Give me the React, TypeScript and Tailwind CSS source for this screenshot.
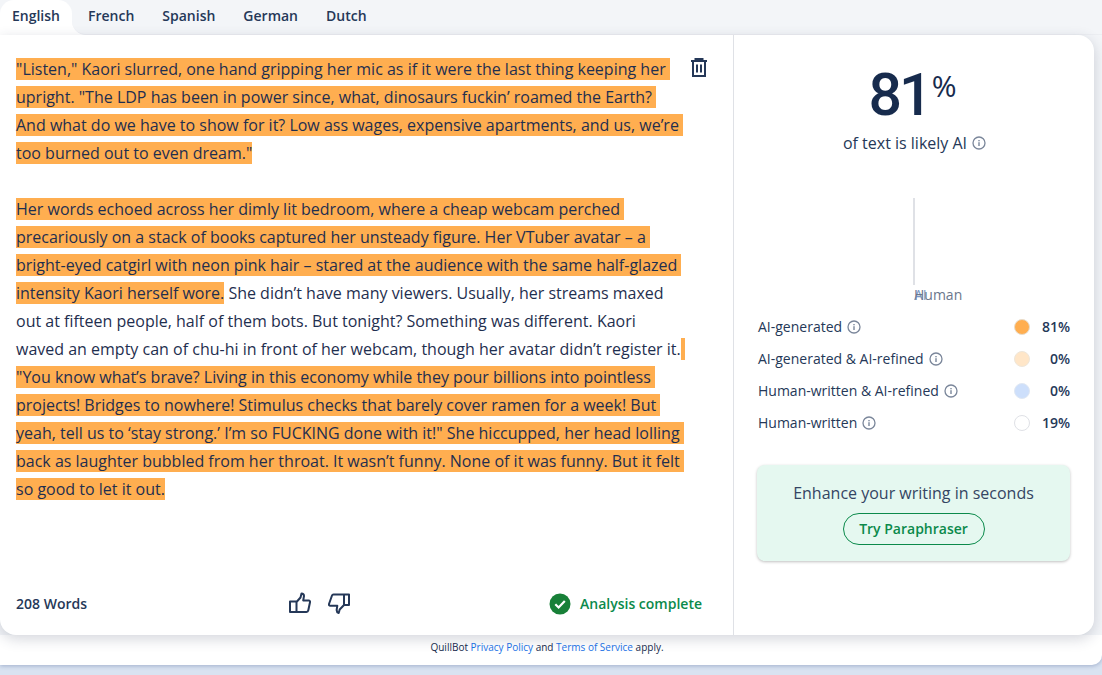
import React from "react";

const Info = ({ className = "" }: { className?: string }) => (
  <svg viewBox="0 0 14 14" className={"w-[14px] h-[14px] shrink-0 " + className} fill="none">
    <circle cx="7" cy="7" r="6" stroke="#7a869a" strokeWidth="1.3" />
    <rect x="6.3" y="6.2" width="1.4" height="3.8" fill="#7a869a" />
    <rect x="6.3" y="4" width="1.4" height="1.3" fill="#7a869a" />
  </svg>
);

const H = ({ children }: { children: React.ReactNode }) => <span className="bg-[#ffae50]">{children}</span>;

const rows = [
  { label: "AI-generated", dot: "bg-[#ffae50] border-[#e8dccb]", pct: "81%" },
  { label: "AI-generated & AI-refined", dot: "bg-[#ffe6c8] border-[#eee6da]", pct: "0%" },
  { label: "Human-written & AI-refined", dot: "bg-[#cddffb] border-[#dfe7f3]", pct: "0%" },
  { label: "Human-written", dot: "bg-white border-[#dfe1e6]", pct: "19%" },
];

export default function App() {
  return (
    <div className="h-[675px] w-[1102px] overflow-hidden bg-[#d9e3f1] font-['Open_Sans','Noto_Sans',sans-serif] text-[#172b4d]">
      <div className="h-[665px] bg-white rounded-br-[10px] shadow-[0_1px_4px_rgba(90,110,160,0.45)] flex flex-col">
        <div className="h-[635px] bg-[#f3f5f8] flex flex-col shrink-0">
          <div className="h-[35px] flex bg-[linear-gradient(#f3f5f8_50%,#ffffff_50%)] shrink-0">
            <div className="w-[72px] bg-white rounded-t-[14px] pl-3 pt-[6px] text-sm font-semibold text-[#253858] leading-[20px]">English</div>
            <div className="flex-1 bg-[#f3f5f8] rounded-bl-[14px] pl-4 pt-[6px] flex gap-7 text-sm font-semibold text-[#253858] leading-[20px] border-b border-[#eceef2]">
              <span>French</span>
              <span>Spanish</span>
              <span>German</span>
              <span>Dutch</span>
            </div>
          </div>
          <div className="relative w-[1094px] h-[600px] bg-white rounded-tr-[16px] rounded-b-[16px] shadow-[0_4px_14px_rgba(40,50,80,0.2)] flex">
            <div className="w-[734px] border-r border-[#dfe1e6] pl-4 pr-[17px] flex flex-col shrink-0">
              <div className="flex-1 flex pt-5">
                <div className="w-[675px] shrink-0 text-base leading-[28px] whitespace-pre text-[#1f2f4f]">
                  <H>{`"Listen," Kaori slurred, one hand gripping her mic as if it were the last thing keeping her \n`}</H>
                  <H>{`upright. "The LDP has been in power since, what, dinosaurs fuckin’ roamed the Earth? \n`}</H>
                  <H>{`And what do we have to show for it? Low ass wages, expensive apartments, and us, we’re \n`}</H>
                  <H>{`too burned out to even dream."`}</H>
                  {"\n\n"}
                  <H>{`Her words echoed across her dimly lit bedroom, where a cheap webcam perched \n`}</H>
                  <H>{`precariously on a stack of books captured her unsteady figure. Her VTuber avatar – a \n`}</H>
                  <H>{`bright-eyed catgirl with neon pink hair – stared at the audience with the same half-glazed \n`}</H>
                  <H>{`intensity Kaori herself wore.`}</H>
                  {` She didn’t have many viewers. Usually, her streams maxed\nout at fifteen people, half of them bots. But tonight? Something was different. Kaori\nwaved an empty can of chu-hi in front of her webcam, though her avatar didn’t register it.`}
                  <H>{` \n`}</H>
                  <H>{`"You know what’s brave? Living in this economy while they pour billions into pointless \n`}</H>
                  <H>{`projects! Bridges to nowhere! Stimulus checks that barely cover ramen for a week! But \n`}</H>
                  <H>{`yeah, tell us to ‘stay strong.’ I’m so FUCKING done with it!" She hiccupped, her head lolling \n`}</H>
                  <H>{`back as laughter bubbled from her throat. It wasn’t funny. None of it was funny. But it felt \n`}</H>
                  <H>{`so good to let it out.`}</H>
                </div>
                <svg viewBox="0 0 16 19" className="w-4 h-[19px] mt-[3px] shrink-0" fill="none" stroke="#253858" strokeWidth="2">
                  <path d="M0 3h16M4.500 3V1h7v2M2 3v15h12V3M6 6.500v8M10 6.500v8" />
                </svg>
              </div>
              <div className="h-[62px] flex items-center justify-between shrink-0 pb-[1px]">
                <span className="text-sm font-semibold text-[#253858] w-[140px]">208 Words</span>
                <div className="flex gap-[17px] items-center ml-[133px]">
                  <svg viewBox="0 0 22 22" className="w-[22px] h-[22px] -mt-[1px]" fill="none" stroke="#253858" strokeWidth="2" strokeLinejoin="round">
                    <path d="M1 9.500h6.500V20H1zM7.500 10l4-4.500L12.500 1.500c1.500 0 2.500 1 2.500 2.500l-.8 4.500h5.500c1 0 1.500.8 1.300 1.800l-1.700 8c-.2 1-.8 1.700-1.800 1.700H7.500" />
                  </svg>
                  <svg viewBox="0 0 22 22" className="w-[22px] h-[22px]" fill="none" stroke="#253858" strokeWidth="2" strokeLinejoin="round">
                    <path d="M16 1.500h5V12h-5M16 1.500H5.500c-.8 0-1.300.4-1.500 1L1 11c-.3 1 .2 1.800 1.300 1.800h7l-.6 3.700c-.2 1.800.5 3 2 3.500l1-3.500L16 12V1.500z" />
                  </svg>
                </div>
                <div className="flex items-center gap-[9px] ml-auto mr-[14px]">
                  <svg viewBox="0 0 22 22" className="w-[22px] h-[22px]">
                    <circle cx="11" cy="11" r="10.500" fill="#188038" />
                    <path d="M6.300 11.300l3.300 3.200 6.200-6.500" fill="none" stroke="#fff" strokeWidth="2.200" />
                  </svg>
                  <span className="text-sm font-semibold text-[#0b8a4b]">Analysis complete</span>
                </div>
              </div>
            </div>
            <div className="flex-1 flex flex-col items-center pt-[21px]">
              <div className="flex items-start h-[75px] mr-[3px]">
                <span className="font-['Roboto',sans-serif] text-[59px] leading-[78px] font-medium text-[#172b4d] tracking-[-3px]">81</span>
                <span className="text-[30px] leading-[44px] font-normal text-[#172b4d] ml-[2px] mt-[8px]">%</span>
              </div>
              <div className="flex items-center gap-[5px] text-base leading-6 text-[#253858] ml-[1px]">
                of text is likely AI <Info />
              </div>
              <div className="flex flex-col items-center mt-[43px] h-[102px] w-full">
                <div className="w-[2px] h-[87px] shrink-0 bg-[#dfe1e6] -ml-[1px]"></div>
                <div className="relative h-5 w-full shrink-0 text-sm leading-5 text-[#6b778c]">
                  <span className="absolute left-[180px] top-0 text-[#5a7fb8] opacity-80">AI</span>
                  <span className="absolute left-[180px] top-0">Human</span>
                </div>
              </div>
              <div className="w-full flex flex-col pl-6 pr-[24px] mt-[11px]">
                {rows.map((r) => (
                  <div key={r.label} className="h-8 flex items-center text-sm text-[#253858]">
                    <span>{r.label}</span>
                    <Info className="ml-[5px]" />
                    <span className={"ml-auto w-4 h-4 rounded-full border " + r.dot}></span>
                    <span className="w-[40px] text-right font-semibold text-[#253858]">{r.pct}</span>
                  </div>
                ))}
              </div>
              <div className="w-[313px] h-[96px] mt-[26px] ml-[-1px] rounded-lg bg-[#e5f8f0] shadow-[0_1px_3px_rgba(0,0,0,0.25)] flex flex-col items-center pt-[16px]">
                <span className="text-base leading-6 text-[#344563]">Enhance your writing in seconds</span>
                <span className="mt-2 w-[142px] h-8 rounded-full border border-[#0b8a4b] flex items-center justify-center text-sm font-semibold text-[#0b8a4b]">Try Paraphraser</span>
              </div>
            </div>
          </div>
        </div>
        <div className="h-[30px] flex items-start justify-center pt-[4px] text-[10px] leading-4 text-[#172b4d] pr-[8px]">
          <span>QuillBot <span className="text-[#1a73e8]">Privacy Policy</span> and <span className="text-[#1a73e8]">Terms of Service</span> apply.</span>
        </div>
      </div>
    </div>
  );
}
